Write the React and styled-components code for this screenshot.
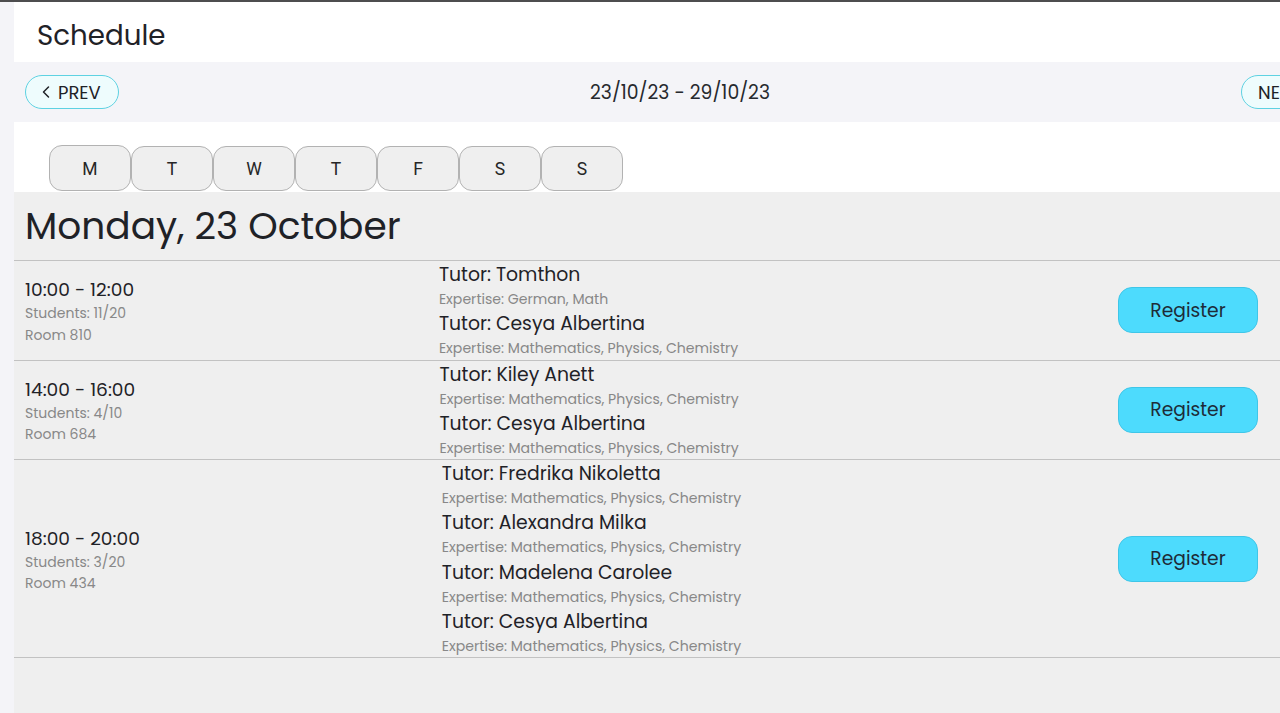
import React from "react";
import styled, { createGlobalStyle } from "styled-components";
import { ChevronLeft, ChevronRight } from "lucide-react";

const GlobalStyle = createGlobalStyle`
  html, body { margin: 0; padding: 0; overflow: hidden; }
  body {
    background: #f4f4f8;
    font-family: "Poppins", "Inter", "Noto Sans", sans-serif;
    color: #22252a;
    border-top: 2px solid #4d4d4f;
  }
  * { box-sizing: border-box; }
`;

const Page = styled.div`
  margin-left: 14px;
  width: 1332px;
  display: flex;
  flex-direction: column;
  min-height: 711px;
`;

const Header = styled.header`
  height: 60px;
  background: #ffffff;
  display: flex;
  align-items: center;
  padding: 8px 0 0 23px;
`;

const Title = styled.h1`
  margin: 0;
  font-weight: 400;
  font-size: 27.7px;
  color: #1f2227;
`;

const WeekNav = styled.nav`
  height: 60px;
  display: flex;
  align-items: center;
  justify-content: space-between;
  padding: 0 11px;
`;

const NavButton = styled.button`
  height: 34px;
  width: 94px;
  padding: 0 0 0 ${(p) => (p.$next ? "16px" : "10px")};
  border-radius: 17px;
  border: 1px solid #5ed2e2;
  background: #eefcfd;
  color: #1f2227;
  font-family: inherit;
  font-size: 18px;
  display: flex;
  align-items: center;
  justify-content: flex-start;
  gap: 2px;
  cursor: pointer;
  svg {
    margin-top: -1px;
    flex: none;
  }
`;

const WeekLabel = styled.span`
  font-size: 18.8px;
  color: #26292e;
`;

const TabStrip = styled.div`
  height: 70px;
  background: #ffffff;
  display: flex;
  align-items: flex-end;
  padding-left: 35px;
`;

const DayTab = styled.button`
  width: 82px;
  height: ${(p) => (p.$active ? "46px" : "45px")};
  margin-bottom: 1px;
  border: 1px solid #b2b2b2;
  border-radius: 13px;
  background: #efefef;
  font-family: "Roboto", sans-serif;
  font-size: 17.5px;
  color: #262626;
  display: flex;
  align-items: center;
  justify-content: center;
  padding: 1px 0 0;
`;

const Content = styled.main`
  flex: 1;
  background: #efefef;
  display: flex;
  flex-direction: column;
`;

const DayHeading = styled.h2`
  margin: 0;
  height: 68px;
  line-height: 68px;
  padding-left: 11px;
  font-weight: 400;
  font-size: 37.5px;
  color: #1f2227;
`;

const Slot = styled.section`
  border-top: 1px solid #c2c2c2;
  display: flex;
  align-items: center;
  padding: 0 88px 0 11px;
  &:last-of-type {
    border-bottom: 1px solid #c2c2c2;
  }
`;

const SlotInfo = styled.div`
  flex: 1 1 auto;
  display: flex;
  flex-direction: column;
  padding-top: 2px;
`;

const SlotTime = styled.div`
  font-size: 18.6px;
  line-height: 27px;
  color: #1f2227;
`;

const SlotMeta = styled.div`
  font-size: 14px;
  line-height: 21.5px;
  color: #888888;
`;

const TutorList = styled.div`
  flex: 1 1 auto;
  display: flex;
  flex-direction: column;
`;

const TutorName = styled.div`
  font-size: 18.8px;
  line-height: 27px;
  color: #1f2227;
`;

const Expertise = styled.div`
  font-size: 14.1px;
  line-height: 22.25px;
  color: #888888;
`;

const RegisterButton = styled.button`
  margin-left: 75px;
  width: 140px;
  height: 46px;
  border-radius: 14px;
  border: 1px solid #3fc6e8;
  background: #4ddbfd;
  color: #1d2b38;
  font-family: inherit;
  font-size: 18.7px;
  cursor: pointer;
`;

const days = ["M", "T", "W", "T", "F", "S", "S"];

const slots = [
  {
    time: "10:00 - 12:00",
    students: "11/20",
    room: "810",
    tutors: [
      { name: "Tomthon", exp: "German, Math" },
      { name: "Cesya Albertina", exp: "Mathematics, Physics, Chemistry" },
    ],
  },
  {
    time: "14:00 - 16:00",
    students: "4/10",
    room: "684",
    tutors: [
      { name: "Kiley Anett", exp: "Mathematics, Physics, Chemistry" },
      { name: "Cesya Albertina", exp: "Mathematics, Physics, Chemistry" },
    ],
  },
  {
    time: "18:00 - 20:00",
    students: "3/20",
    room: "434",
    tutors: [
      { name: "Fredrika Nikoletta", exp: "Mathematics, Physics, Chemistry" },
      { name: "Alexandra Milka", exp: "Mathematics, Physics, Chemistry" },
      { name: "Madelena Carolee", exp: "Mathematics, Physics, Chemistry" },
      { name: "Cesya Albertina", exp: "Mathematics, Physics, Chemistry" },
    ],
  },
];

export default function App() {
  return (
    <>
      <GlobalStyle />
      <Page>
        <Header>
          <Title>Schedule</Title>
        </Header>
        <WeekNav>
          <NavButton>
            <ChevronLeft size={20} strokeWidth={1.8} />
            PREV
          </NavButton>
          <WeekLabel>23/10/23 - 29/10/23</WeekLabel>
          <NavButton $next>
            NEXT
            <ChevronRight size={20} strokeWidth={1.8} />
          </NavButton>
        </WeekNav>
        <TabStrip>
          {days.map((d, i) => (
            <DayTab key={i} $active={i === 0}>
              {d}
            </DayTab>
          ))}
        </TabStrip>
        <Content>
          <DayHeading>Monday, 23 October</DayHeading>
          {slots.map((s) => (
            <Slot key={s.time}>
              <SlotInfo>
                <SlotTime>{s.time}</SlotTime>
                <SlotMeta>Students: {s.students}</SlotMeta>
                <SlotMeta>Room {s.room}</SlotMeta>
              </SlotInfo>
              <TutorList>
                {s.tutors.map((t, i) => (
                  <div key={i}>
                    <TutorName>Tutor: {t.name}</TutorName>
                    <Expertise>Expertise: {t.exp}</Expertise>
                  </div>
                ))}
              </TutorList>
              <RegisterButton>Register</RegisterButton>
            </Slot>
          ))}
        </Content>
      </Page>
    </>
  );
}
